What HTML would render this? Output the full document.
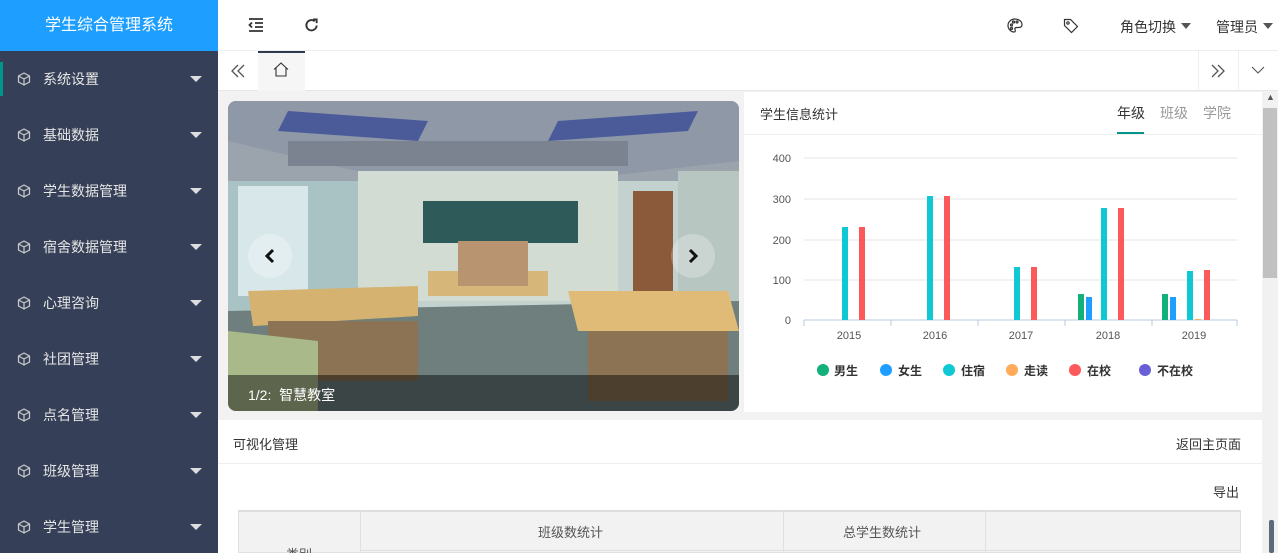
<!DOCTYPE html>
<html><head><meta charset="utf-8"><style>
*{margin:0;padding:0;box-sizing:border-box}
html{overflow:hidden}
body{width:1278px;height:553px;overflow:hidden;font-family:"Liberation Sans","Noto Sans CJK SC",sans-serif;background:#f2f2f2;position:relative;font-size:14px;color:#333}
.side{position:absolute;left:0;top:0;width:218px;height:553px;background:#353f57}
.logo{height:51px;background:#1e9fff;color:#fff;font-size:16px;text-align:center;line-height:51px}
.item{height:56px;line-height:56px;color:#e6e6e6;font-size:14px;padding-left:43px;position:relative}
.item svg{position:absolute;left:17px;top:21px}
.item:after{content:"";position:absolute;right:16px;top:25px;border:6px solid transparent;border-top:6px solid #ddd;border-bottom:0}
.act:before{content:"";position:absolute;left:0;width:3px;height:34px;background:#009688;top:11px}
.top{position:absolute;left:218px;top:0;right:0;height:51px;background:#fff;border-bottom:1px solid #eee}
.tabs{position:absolute;left:218px;top:51px;right:0;height:40px;background:#fff;border-bottom:1px solid #e6e6e6}
.card{position:absolute;background:#fff}
.t{position:absolute;white-space:nowrap}
</style></head><body>
<div class="side">
<div class="logo">学生综合管理系统</div>
<div class="item act"><svg width="14" height="14" viewBox="0 0 14 14" fill="none" stroke="#ccc" stroke-width="1.2"><path d="M7 1l5.5 3v6L7 13 1.5 10V4z M1.5 4L7 7l5.5-3 M7 7v6"/></svg>系统设置</div>
<div class="item"><svg width="14" height="14" viewBox="0 0 14 14" fill="none" stroke="#ccc" stroke-width="1.2"><path d="M7 1l5.5 3v6L7 13 1.5 10V4z M1.5 4L7 7l5.5-3 M7 7v6"/></svg>基础数据</div>
<div class="item"><svg width="14" height="14" viewBox="0 0 14 14" fill="none" stroke="#ccc" stroke-width="1.2"><path d="M7 1l5.5 3v6L7 13 1.5 10V4z M1.5 4L7 7l5.5-3 M7 7v6"/></svg>学生数据管理</div>
<div class="item"><svg width="14" height="14" viewBox="0 0 14 14" fill="none" stroke="#ccc" stroke-width="1.2"><path d="M7 1l5.5 3v6L7 13 1.5 10V4z M1.5 4L7 7l5.5-3 M7 7v6"/></svg>宿舍数据管理</div>
<div class="item"><svg width="14" height="14" viewBox="0 0 14 14" fill="none" stroke="#ccc" stroke-width="1.2"><path d="M7 1l5.5 3v6L7 13 1.5 10V4z M1.5 4L7 7l5.5-3 M7 7v6"/></svg>心理咨询</div>
<div class="item"><svg width="14" height="14" viewBox="0 0 14 14" fill="none" stroke="#ccc" stroke-width="1.2"><path d="M7 1l5.5 3v6L7 13 1.5 10V4z M1.5 4L7 7l5.5-3 M7 7v6"/></svg>社团管理</div>
<div class="item"><svg width="14" height="14" viewBox="0 0 14 14" fill="none" stroke="#ccc" stroke-width="1.2"><path d="M7 1l5.5 3v6L7 13 1.5 10V4z M1.5 4L7 7l5.5-3 M7 7v6"/></svg>点名管理</div>
<div class="item"><svg width="14" height="14" viewBox="0 0 14 14" fill="none" stroke="#ccc" stroke-width="1.2"><path d="M7 1l5.5 3v6L7 13 1.5 10V4z M1.5 4L7 7l5.5-3 M7 7v6"/></svg>班级管理</div>
<div class="item"><svg width="14" height="14" viewBox="0 0 14 14" fill="none" stroke="#ccc" stroke-width="1.2"><path d="M7 1l5.5 3v6L7 13 1.5 10V4z M1.5 4L7 7l5.5-3 M7 7v6"/></svg>学生管理</div>
</div>
<div class="top">
<svg style="position:absolute;left:30px;top:18px" width="16" height="14" viewBox="0 0 16 14" fill="none" stroke="#333" stroke-width="1.8"><path d="M1 1h14M7 5h8M7 9h8M1 13h14M4 4.5L1.5 7 4 9.5"/></svg>
<svg style="position:absolute;left:86px;top:18px" width="15" height="15" viewBox="0 0 16 16" fill="none" stroke="#333" stroke-width="2"><path d="M13.5 8A5.5 5.5 0 1 1 11.5 3.5"/><path d="M9.5 1.5h4v4" /></svg>
<svg style="position:absolute;left:789px;top:18px" width="16" height="15" viewBox="0 0 16 15" fill="none" stroke="#333" stroke-width="1.2"><path d="M8 1C4 1 1 4 1 7.5S4 14 7 14c1.5 0 1.5-1.5 1-2.5s0-2 1.5-2H12c2 0 3-1.2 3-3C15 3.5 12 1 8 1z"/><circle cx="4.5" cy="7" r="1"/><circle cx="6.5" cy="4" r="1"/><circle cx="10" cy="4" r="1"/><circle cx="4.5" cy="10.5" r="1"/></svg>
<svg style="position:absolute;left:845px;top:18px" width="16" height="16" viewBox="0 0 16 16" fill="none" stroke="#333" stroke-width="1.2"><path d="M1.5 1.5h6l7 7-6 6-7-7z"/><circle cx="5" cy="5" r="1.2"/></svg>
<span class="t" style="left:902px;top:17px;color:#333">角色切换</span>
<span class="t" style="left:963px;top:23px;border:5px solid transparent;border-top:6px solid #555"></span>
<span class="t" style="left:998px;top:17px;color:#333">管理员</span>
<span class="t" style="left:1045px;top:23px;border:5px solid transparent;border-top:6px solid #555"></span>
</div>
<div class="tabs">
<svg style="position:absolute;left:13px;top:13px" width="14" height="14" viewBox="0 0 14 14" fill="none" stroke="#555" stroke-width="1.3"><path d="M7 1L1 7l6 6M13 1L7 7l6 6"/></svg>
<div style="position:absolute;left:40px;top:0;width:47px;height:40px;background:#f6f6f6;border-top:2px solid #2f3a4f"></div>
<svg style="position:absolute;left:55px;top:11px" width="16" height="15" viewBox="0 0 16 15" fill="none" stroke="#333" stroke-width="1.1"><path d="M1 7.5L8 1l7 6.5M3 6v8h10V6"/></svg>
<div style="position:absolute;left:980px;top:0;width:1px;height:40px;background:#eee"></div>
<div style="position:absolute;left:1020px;top:0;width:1px;height:40px;background:#eee"></div>
<svg style="position:absolute;left:993px;top:13px" width="14" height="14" viewBox="0 0 14 14" fill="none" stroke="#555" stroke-width="1.3"><path d="M1 1l6 6-6 6M7 1l6 6-6 6"/></svg>
<svg style="position:absolute;left:1033px;top:15px" width="14" height="8" viewBox="0 0 14 8" fill="none" stroke="#555" stroke-width="1.1"><path d="M1 1l6 6 6-6"/></svg>
</div>
<!-- carousel -->
<div style="position:absolute;left:228px;top:101px;width:511px;height:310px;border-radius:8px;overflow:hidden;background:#a9b8bd">
<svg width="511" height="310" viewBox="0 0 511 310">
<rect width="511" height="310" fill="#c4d2cf"/>
<rect x="0" y="0" width="511" height="80" fill="#9ba3ad"/>
<polygon points="0,0 511,0 511,60 380,75 150,75 0,40" fill="#8e98a6"/>
<rect x="0" y="80" width="150" height="130" fill="#a9c3c4"/>
<rect x="10" y="85" width="70" height="110" fill="#d8e8ea"/>
<rect x="130" y="70" width="260" height="130" fill="#d3dcd2"/>
<rect x="195" y="100" width="155" height="42" fill="#2e5a5a"/>
<rect x="405" y="90" width="40" height="110" fill="#8a5a3a"/>
<rect x="450" y="70" width="61" height="140" fill="#b8c6c1"/>
<polygon points="0,210 511,200 511,310 0,310" fill="#6e7f7e"/>
<polygon points="20,190 190,185 190,215 25,225" fill="#d6b271"/>
<polygon points="340,190 500,190 511,230 350,230" fill="#e0bb78"/>
<rect x="40" y="220" width="150" height="60" fill="#8c7354"/>
<rect x="360" y="230" width="140" height="70" fill="#8c7354"/>
<rect x="200" y="170" width="120" height="25" fill="#d7b67a"/>
<rect x="230" y="140" width="70" height="45" fill="#b89470"/>
<polygon points="0,230 90,240 90,310 0,310" fill="#a9b98a"/>
<polygon points="60,10 200,20 190,40 50,30" fill="#4b5b9a"/>
<polygon points="330,20 470,10 460,30 320,40" fill="#4b5b9a"/>
<rect x="60" y="40" width="340" height="25" fill="#7a838f"/>
</svg>
<div style="position:absolute;left:0;bottom:0;width:100%;height:36px;background:rgba(0,0,0,.45)"></div>
<span class="t" style="left:20px;top:284px;color:#fff;font-size:14px">1/2:&nbsp; 智慧教室</span>
<div style="position:absolute;left:20px;top:133px;width:44px;height:44px;border-radius:50%;background:rgba(255,255,255,.25)"></div>
<svg style="position:absolute;left:37px;top:147px" width="10" height="16" viewBox="0 0 10 16" fill="none" stroke="#111" stroke-width="3"><path d="M8 2L2 8l6 6"/></svg>
<div style="position:absolute;left:443px;top:133px;width:44px;height:44px;border-radius:50%;background:rgba(255,255,255,.25)"></div>
<svg style="position:absolute;left:460px;top:147px" width="10" height="16" viewBox="0 0 10 16" fill="none" stroke="#111" stroke-width="3"><path d="M2 2l6 6-6 6"/></svg>
</div>
<!-- chart card -->
<div class="card" style="left:744px;top:92px;width:518px;height:320px">
<span class="t" style="left:16px;top:12px;font-size:13px">学生信息统计</span>
<span class="t" style="left:373px;top:11px;font-size:14px">年级</span>
<span class="t" style="left:416px;top:11px;font-size:14px;color:#999">班级</span>
<span class="t" style="left:459px;top:11px;font-size:14px;color:#999">学院</span>
<div style="position:absolute;left:373px;top:40px;width:27px;height:2px;background:#009688"></div>
<div style="position:absolute;left:0;top:42px;width:518px;height:1px;background:#f0f0f0"></div>
<svg style="position:absolute;left:0;top:0" width="518" height="320" viewBox="0 0 518 320" font-family="Liberation Sans" font-size="11" fill="#555">
<g stroke="#e6e6e6"><path d="M60 66H493M60 107H493M60 148H493M60 188H493"/></g>
<path d="M60 228H493" stroke="#b8c8e0"/>
<g stroke="#b8c8e0"><path d="M60 228v6M147 228v6M234 228v6M321 228v6M408 228v6M493 228v6"/></g>
<g text-anchor="end"><text x="47" y="70">400</text><text x="47" y="111">300</text><text x="47" y="152">200</text><text x="47" y="192">100</text><text x="47" y="232">0</text></g>
<g text-anchor="middle"><text x="105" y="247">2015</text><text x="191" y="247">2016</text><text x="277" y="247">2017</text><text x="364" y="247">2018</text><text x="450" y="247">2019</text></g>
<g fill="#10c8d4"><rect x="98" y="135" width="6" height="93"/><rect x="183" y="104" width="6" height="124"/><rect x="270" y="175" width="6" height="53"/><rect x="357" y="116" width="6" height="112"/><rect x="443" y="179" width="6" height="49"/></g>
<g fill="#fc5a5a"><rect x="115" y="135" width="6" height="93"/><rect x="200" y="104" width="6" height="124"/><rect x="287" y="175" width="6" height="53"/><rect x="374" y="116" width="6" height="112"/><rect x="460" y="178" width="6" height="50"/></g>
<g fill="#12b07a"><rect x="334" y="202" width="6" height="26"/><rect x="418" y="202" width="6" height="26"/></g>
<g fill="#1e9fff"><rect x="342" y="205" width="6" height="23"/><rect x="426" y="205" width="6" height="23"/></g>
<rect x="451" y="227" width="6" height="1" fill="#ffab5a"/>
<g font-size="12" fill="#333" font-weight="bold" font-family="Liberation Sans,Noto Sans CJK SC"><circle cx="79" cy="278" r="6" fill="#12b07a"/><text x="90" y="283">男生</text>
<circle cx="142" cy="278" r="6" fill="#1e9fff"/><text x="154" y="283">女生</text>
<circle cx="205" cy="278" r="6" fill="#10c8d4"/><text x="217" y="283">住宿</text>
<circle cx="268" cy="278" r="6" fill="#ffab5a"/><text x="280" y="283">走读</text>
<circle cx="331" cy="278" r="6" fill="#fc5a5a"/><text x="343" y="283">在校</text>
<circle cx="401" cy="278" r="6" fill="#6a5fd6"/><text x="413" y="283">不在校</text></g>
</svg>
</div>
<!-- bottom card -->
<div class="card" style="left:218px;top:420px;width:1044px;height:133px;overflow:hidden">
<span class="t" style="left:15px;top:14px;font-size:13px">可视化管理</span>
<span class="t" style="left:958px;top:14px;font-size:13px">返回主页面</span>
<div style="position:absolute;left:0;top:43px;width:1044px;height:1px;background:#eee"></div>
<span class="t" style="left:995px;top:62px;font-size:13px">导出</span>
<div style="position:absolute;left:20px;top:90px;width:1003px;height:43px;background:#f2f2f2;border:1px solid #e0e0e0;border-top:2px solid #ddd"></div>
<div style="position:absolute;left:142px;top:91px;width:1px;height:42px;background:#e0e0e0"></div>
<div style="position:absolute;left:565px;top:91px;width:1px;height:42px;background:#e0e0e0"></div>
<div style="position:absolute;left:767px;top:91px;width:1px;height:42px;background:#e0e0e0"></div>
<div style="position:absolute;left:142px;top:130px;width:881px;height:1px;background:#e0e0e0"></div>
<span class="t" style="left:320px;top:102px;font-size:13px;color:#555">班级数统计</span>
<span class="t" style="left:625px;top:102px;font-size:13px;color:#555">总学生数统计</span>
<span class="t" style="left:68px;top:124px;font-size:13px;color:#555">类别</span>
</div>
<!-- scrollbar -->
<div style="position:absolute;left:1262px;top:92px;width:16px;height:461px;background:#f1f1f1"></div>
<div style="position:absolute;left:1263px;top:108px;width:14px;height:170px;background:#c1c1c1"></div>
<span class="t" style="left:1266px;top:92px;font-size:9px;color:#555">▲</span>
<div style="position:absolute;left:1269px;top:520px;width:5px;height:33px;background:#5a6a7a;border-radius:2px"></div>
</body></html>
